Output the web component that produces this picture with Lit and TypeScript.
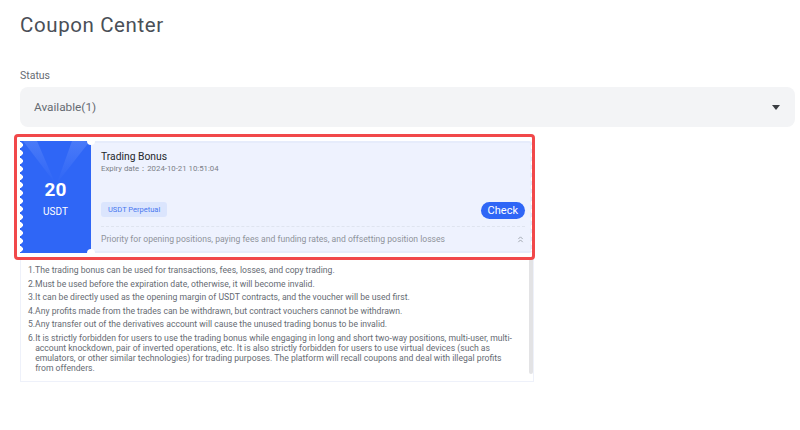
import { LitElement, html, css } from "lit";
import { customElement } from "lit/decorators.js";

const RULES = [
  "1.The trading bonus can be used for transactions, fees, losses, and copy trading.",
  "2.Must be used before the expiration date, otherwise, it will become invalid.",
  "3.It can be directly used as the opening margin of USDT contracts, and the voucher will be used first.",
  "4.Any profits made from the trades can be withdrawn, but contract vouchers cannot be withdrawn.",
  "5.Any transfer out of the derivatives account will cause the unused trading bonus to be invalid.",
];
const LAST = "It is strictly forbidden for users to use the trading bonus while engaging in long and short two-way positions, multi-user, multi-account knockdown, pair of inverted operations, etc. It is also strictly forbidden for users to use virtual devices (such as emulators, or other similar technologies) for trading purposes. The platform will recall coupons and deal with illegal profits from offenders.";

@customElement("app-root")
export class AppRoot extends LitElement {
  static styles = css`
    :host {
      display: block;
      width: 800px;
      height: 430px;
      overflow: hidden;
      background: #fff;
      font-family: Roboto, "Noto Sans", sans-serif;
      box-sizing: border-box;
      padding: 11px 5px 0 20px;
      color: #1f2329;
    }
    h1 {
      margin: 0;
      font-size: 20.5px;
      line-height: 28px;
      font-weight: 400;
      letter-spacing: 0.6px;
      color: #4a4f57;
    }
    .label {
      margin-top: 29px;
      font-size: 10.5px;
      line-height: 16px;
      color: #666b73;
    }
    .select {
      margin-top: 3px;
      height: 40px;
      background: #f3f4f6;
      border-radius: 8px;
      display: flex;
      align-items: center;
      justify-content: space-between;
      padding: 0 15px 0 14px;
      font-size: 11.8px;
      color: #666b73;
    }
    .arrow {
      width: 0;
      height: 0;
      border-left: 4.5px solid transparent;
      border-right: 4.5px solid transparent;
      border-top: 5.5px solid #3a3d42;
    }
    .wrap {
      position: relative;
      width: 512px;
      margin-top: 14px;
    }
    .highlight {
      position: absolute;
      left: -6px;
      top: -7px;
      width: 521px;
      height: 126px;
      box-sizing: border-box;
      border: 3px solid #f1484a;
      border-radius: 4px;
      pointer-events: none;
      z-index: 3;
    }
    .coupon {
      display: flex;
      height: 112px;
    }
    .face {
      width: 71px;
      flex: none;
      box-sizing: border-box;
      position: relative;
      overflow: hidden;
      background: #2f66f6;
      color: #fff;
      display: flex;
      flex-direction: column;
      align-items: center;
      padding-top: 37px;
      border-radius: 0 2px 2px 0;
    }
    .rays {
      position: absolute;
      left: 0;
      top: 0;
      width: 71px;
      height: 60px;
    }
    .scallop {
      position: absolute;
      left: 0;
      top: 0;
      bottom: 0;
      width: 4px;
      background: radial-gradient(circle at 0 4px, #fff 2.6px, transparent 3.1px) 0 0 / 4px 8px repeat-y;
    }
    .value {
      position: relative;
      font-size: 19px;
      line-height: 24px;
      font-weight: 700;
    }
    .unit {
      position: relative;
      font-size: 10px;
      line-height: 14px;
      margin-top: 3px;
    }
    .body {
      flex: 1;
      position: relative;
      box-sizing: border-box;
      background: #eef2fe;
      border: 2px solid #e6ecfb;
      border-left: none;
      padding: 7px 5px 0 10px;
      display: flex;
      flex-direction: column;
      border-radius: 0 3px 3px 0;
    }
    .notch {
      position: absolute;
      left: -4px;
      width: 8px;
      height: 8px;
      background: #fff;
      border-radius: 50%;
    }
    .notch.t { top: -6px; }
    .notch.b { bottom: -6px; }
    .dots {
      position: absolute;
      right: -3px;
      top: 0;
      bottom: 0;
      width: 4px;
      background: radial-gradient(circle at 4px 4px, #fff 2.2px, transparent 2.7px) 0 0 / 4px 8px repeat-y;
    }
    .name {
      font-size: 10.3px;
      line-height: 14px;
      color: #24272c;
    }
    .expiry {
      font-size: 7.8px;
      line-height: 10px;
      color: #7b8087;
      display: flex;
    }
    .tagrow {
      margin-top: 28px;
      display: flex;
      align-items: flex-start;
      justify-content: space-between;
      height: 17px;
    }
    .tag {
      background: #dbe5fd;
      color: #4a78f0;
      font-size: 7.5px;
      line-height: 15px;
      height: 15px;
      padding: 0 7px;
      border-radius: 3px;
    }
    .check {
      background: #2f66f6;
      color: #fff;
      font-size: 11px;
      line-height: 17px;
      height: 17px;
      padding: 0 7px;
      border-radius: 9px;
    }
    .foot {
      margin-top: 7px;
      border-top: 1px dashed #dfe4ef;
      display: flex;
      justify-content: space-between;
      align-items: center;
      height: 24px;
      font-size: 8.6px;
      color: #8e939b;
    }
    .chev {
      width: 7px;
      height: 7px;
      margin-right: 1px;
      flex: none;
    }
    .rules {
      position: relative;
      box-sizing: border-box;
      width: 514px;
      height: 124px;
      margin-top: 5px;
      padding: 7px 14px 0 7px;
      border: 1px solid #eef1fa;
      border-top: none;
      font-size: 8.65px;
      color: #666b73;
    }
    .rules p {
      margin: 0 0 3px;
      line-height: 10.6px;
    }
    .rules p.last {
      display: flex;
      line-height: 10px;
    }
    .rules p.last span:first-child { flex: none; }
    .thumb {
      position: absolute;
      right: 0;
      top: 0;
      width: 4px;
      height: 116px;
      background: #e3e3e5;
      border-radius: 0 0 2px 2px;
    }
  `;

  render() {
    return html`
      <h1>Coupon Center</h1>
      <div class="label">Status</div>
      <div class="select"><span>Available(1)</span><span class="arrow"></span></div>
      <div class="wrap">
        <div class="highlight"></div>
        <div class="coupon">
          <div class="face">
            <svg class="rays" viewBox="0 0 71 60">
              <defs>
                <linearGradient id="fade" x1="0" y1="0" x2="0" y2="1">
                  <stop offset="0" stop-color="#6a92fa" stop-opacity=".45" />
                  <stop offset="1" stop-color="#6a92fa" stop-opacity="0" />
                </linearGradient>
              </defs>
              <path d="M3 0H17L35 42Z" fill="url(#fade)" />
              <path d="M52 0H70L37 42Z" fill="url(#fade)" />
            </svg>
            <div class="scallop"></div>
            <div class="value">20</div>
            <div class="unit">USDT</div>
          </div>
          <div class="body">
            <span class="notch t"></span>
            <span class="notch b"></span>
            <span class="dots"></span>
            <div class="name">Trading Bonus</div>
            <div class="expiry"><span>Expiry date：</span><span>2024-10-21 10:51:04</span></div>
            <div class="tagrow">
              <span class="tag">USDT Perpetual</span>
              <span class="check">Check</span>
            </div>
            <div class="foot">
              <span>Priority for opening positions, paying fees and funding rates, and offsetting position losses</span>
              <svg class="chev" viewBox="0 0 8 8" fill="none" stroke="#9aa0a8" stroke-width="1">
                <path d="M1.500 3.500 4 1l2.500 2.500M1.500 7 4 4.500 6.500 7" />
              </svg>
            </div>
          </div>
        </div>
      </div>
      <div class="rules">
        <span class="thumb"></span>
        ${RULES.map((r) => html`<p>${r}</p>`)}
        <p class="last"><span>6.</span><span>${LAST}</span></p>
      </div>
    `;
  }
}
